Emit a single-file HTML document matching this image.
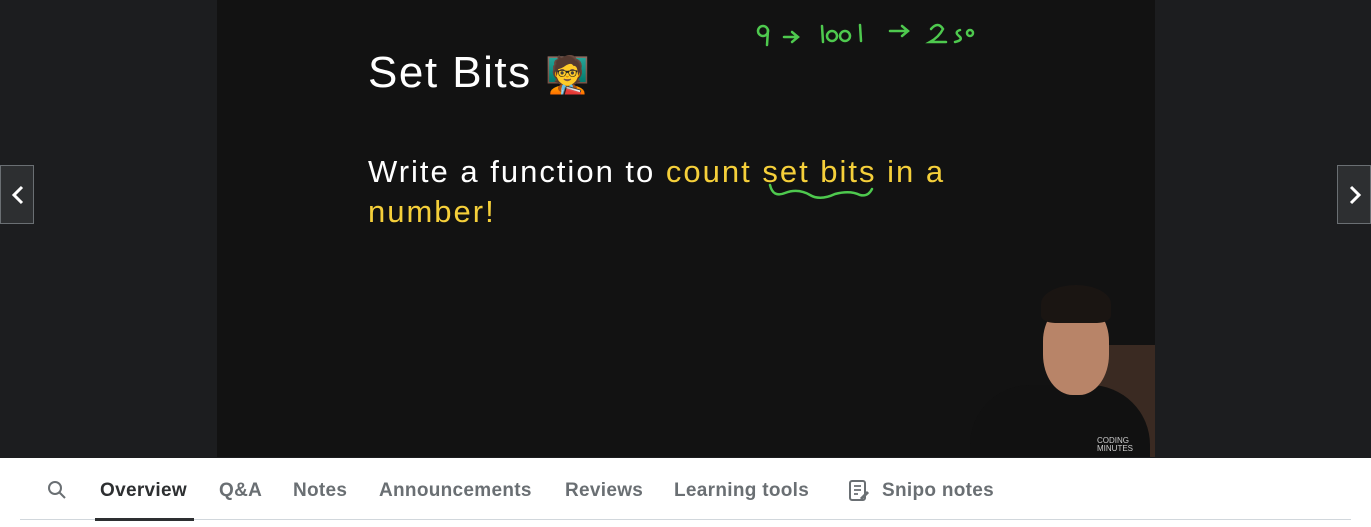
<!DOCTYPE html>
<html><head><style>
body{margin:0;width:1371px;height:527px;overflow:hidden;background:#fff;font-family:"Liberation Sans",sans-serif;position:relative}
.top{position:absolute;left:0;top:0;width:1371px;height:458px;background:#1c1d1f}
.vid{position:absolute;left:217px;top:0;width:938px;height:457px;background:#121212}
.t{position:absolute;color:#fff;font-weight:500}
.nav{position:absolute;top:165px;width:34px;height:59px;background:#2d2f31;border:1px solid #6a6f73;box-sizing:border-box}
.tab{position:absolute;top:480px;font-size:19px;font-weight:bold;color:#6a6f73;letter-spacing:0.3px}
</style></head><body>
<div class="top"></div>
<div class="vid"></div>
<div class="t" style="left:368px;top:48px;font-size:44px;letter-spacing:1.5px">Set Bits <span style="font-size:36px;letter-spacing:0">🧑‍🏫</span></div>
<div class="t" style="left:368px;top:152px;font-size:31px;line-height:40px;width:640px;letter-spacing:2px">Write a function to <span style="color:#f5cf3a">count set bits in a number!</span></div>
<svg style="position:absolute;left:740px;top:10px" width="250" height="200">
<g stroke="#4ec94e" stroke-width="2.5" fill="none" stroke-linecap="round">
<circle cx="23" cy="21" r="5"/><path d="M28 20 L27 35"/>
<path d="M44 27 H58 M52 22 L58 27 L52 32"/>
<path d="M82 16 L83 32"/><circle cx="92" cy="26" r="5"/><circle cx="105" cy="26" r="5"/><path d="M120 15 L121 31"/>
<path d="M150 21 H168 M162 16 L168 21 L162 26"/>
<path d="M191 19 Q198 11 203 19 Q199 27 190 32 H206"/>
<path d="M220 20 Q214 22 219 26 Q224 30 215 32"/><circle cx="230" cy="23" r="3"/>
<path d="M30 175 Q33 188 45 183 Q58 178 70 185 Q80 191 95 184 Q110 180 120 185 Q128 187 132 179"/>
</g></svg>
<div style="position:absolute;left:955px;top:285px;width:200px;height:172px;overflow:hidden">
<div style="position:absolute;left:125px;top:60px;width:75px;height:112px;background:#3a2a22;border-radius:20px 0 0 0"></div>
<div style="position:absolute;left:15px;top:100px;width:180px;height:90px;background:#111;border-radius:60px 60px 0 0"></div>
<div style="position:absolute;left:88px;top:20px;width:66px;height:90px;background:#b88468;border-radius:40% 40% 45% 45%"></div>
<div style="position:absolute;left:86px;top:0px;width:70px;height:38px;background:#1a1512;border-radius:50% 50% 20% 20%"></div>
<div style="position:absolute;left:142px;top:152px;font-size:8px;color:#ccc;line-height:8px">CODING<br>MINUTES</div>
</div>
<div class="nav" style="left:0"><svg width="34" height="59"><path d="M21 21 L13 29 L21 37" stroke="#fff" stroke-width="3" fill="none"/></svg></div>
<div class="nav" style="left:1337px"><svg width="34" height="59"><path d="M13 21 L21 29 L13 37" stroke="#fff" stroke-width="3" fill="none"/></svg></div>
<svg style="position:absolute;left:47px;top:480px" width="20" height="20"><circle cx="8" cy="8" r="6" stroke="#6a6f73" stroke-width="2" fill="none"/><path d="M12.5 12.5 L18 18" stroke="#6a6f73" stroke-width="2"/></svg>
<div class="tab" style="left:100px;color:#2d2f31">Overview</div>
<div class="tab" style="left:219px">Q&amp;A</div>
<div class="tab" style="left:293px">Notes</div>
<div class="tab" style="left:379px">Announcements</div>
<div class="tab" style="left:565px">Reviews</div>
<div class="tab" style="left:674px">Learning tools</div>
<svg style="position:absolute;left:848px;top:479px" width="22" height="24"><rect x="2" y="2" width="15" height="19" rx="2" stroke="#6a6f73" stroke-width="2" fill="none"/><path d="M6 7H13M6 11H13M6 15H10" stroke="#6a6f73" stroke-width="1.8"/><path d="M13 20 L20 13" stroke="#6a6f73" stroke-width="3"/></svg>
<div class="tab" style="left:882px">Snipo notes</div>
<div style="position:absolute;left:20px;top:519px;width:1331px;height:1px;background:#d1d7dc"></div>
<div style="position:absolute;left:95px;top:518px;width:99px;height:3px;background:#2d2f31"></div>
</body></html>
